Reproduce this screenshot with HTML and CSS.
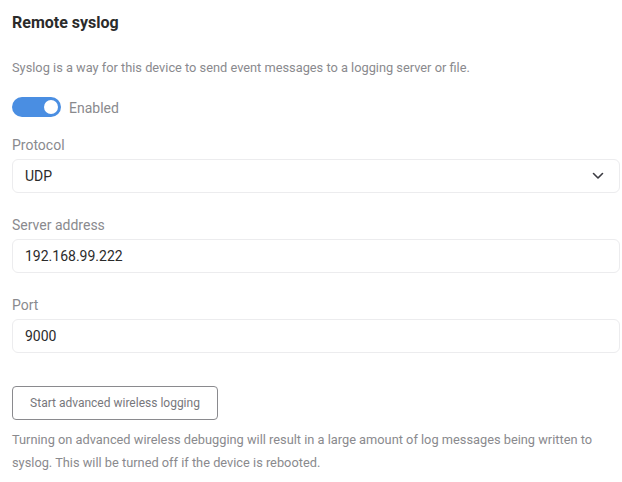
FILE: index.html
```html
<!DOCTYPE html>
<html>
<head>
<meta charset="utf-8">
<link rel="stylesheet" href="styles.css">
</head>
<body>
<div class="page">
  <h2 class="title">Remote syslog</h2>
  <p class="desc">Syslog is a way for this device to send event messages to a logging server or file.</p>
  <label class="toggle-row">
    <span class="toggle"><span class="knob"></span></span>
    <span class="toggle-label">Enabled</span>
  </label>
  <div class="field">
    <div class="label">Protocol</div>
    <div class="box select">
      <span>UDP</span>
      <svg class="chev" width="12" height="8" viewBox="0 0 12 8"><path d="M1.5 1.5 L6 6 L10.5 1.5" fill="none" stroke="#3c3c43" stroke-width="1.6" stroke-linecap="round" stroke-linejoin="round"/></svg>
    </div>
  </div>
  <div class="field">
    <div class="label">Server address</div>
    <div class="box">192.168.99.222</div>
  </div>
  <div class="field">
    <div class="label">Port</div>
    <div class="box">9000</div>
  </div>
  <button class="btn">Start advanced wireless logging</button>
  <p class="note">Turning on advanced wireless debugging will result in a large amount of log messages being written to syslog. This will be turned off if the device is rebooted.</p>
</div>
</body>
</html>
```
FILE: styles.css
```css
html, body {
  margin: 0;
  padding: 0;
  background: #ffffff;
}
.page {
  padding: 11px 2px 0 12px;
  font-family: Roboto, "Liberation Sans", sans-serif;
  color: #333;
}
.title {
  margin: 0;
  font-size: 16px;
  line-height: 24px;
  font-weight: 700;
  color: #2b2b2b;
}
.desc {
  margin: 23px 0 0;
  font-size: 12.8px;
  line-height: 20px;
  color: #8a8a8e;
}
.toggle-row {
  margin-top: 19px;
  display: flex;
  align-items: center;
  gap: 8px;
  height: 20px;
}
.toggle {
  width: 49px;
  height: 20px;
  border-radius: 10px;
  background: #4a8ee2;
  display: flex;
  align-items: center;
  justify-content: flex-end;
  padding-right: 3px;
  box-sizing: border-box;
}
.knob {
  width: 14px;
  height: 14px;
  border-radius: 50%;
  background: #fff;
}
.toggle-label {
  font-size: 14px;
  padding-top: 2px;
  color: #8a8a8e;
}
.field {
  margin-top: 18px;
}
.field + .field {
  margin-top: 22px;
}
.label {
  font-size: 14px;
  line-height: 20px;
  color: #8a8a8e;
  margin-bottom: 4px;
}
.box {
  height: 34px;
  box-sizing: border-box;
  border: 1px solid #ececee;
  border-radius: 6px;
  padding: 0 12px;
  display: flex;
  align-items: center;
  font-size: 14px;
  color: #2b2b2b;
}
.select {
  justify-content: space-between;
  padding-right: 15px;
}
.btn {
  display: block;
  margin-top: 33px;
  height: 34px;
  width: 206px;
  border: 1px solid #8a8a8e;
  border-radius: 4px;
  background: #fff;
  font-family: Roboto, "Liberation Sans", sans-serif;
  font-size: 12px;
  color: #77777c;
  padding: 0;
}
.note {
  margin: 8px 0 0;
  font-size: 12.8px;
  line-height: 23px;
  color: #8a8a8e;
}
```
